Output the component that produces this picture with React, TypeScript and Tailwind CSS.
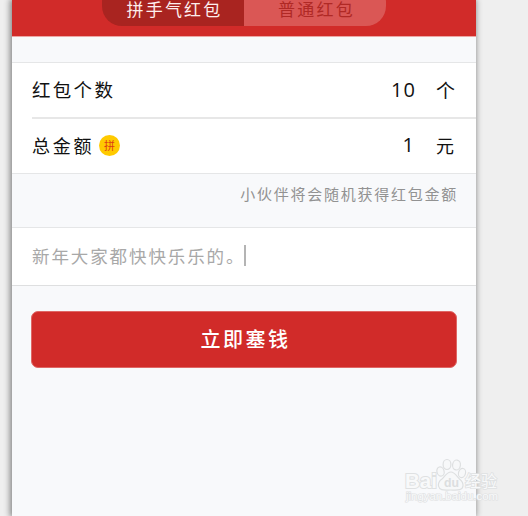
const Tabs = () => (
  <div className="-mt-[18px] flex h-11 w-[284px] overflow-hidden rounded-[20px] text-[17px] leading-none tracking-[2.2px]">
    <div className="flex w-[142px] items-center justify-center bg-[#a92420] pt-[8px] pl-[3px] text-[#fdeeed]">拼手气红包</div>
    <div className="flex w-[142px] items-center justify-center bg-[#da5755] pt-[8px] pl-[3px] text-[#b02925]">普通红包</div>
  </div>
);

const Watermark = () => (
  <div className="absolute top-[456px] left-[402px] h-[50px] w-[100px]">
    <svg width="100" height="50" viewBox="0 0 100 50" className="overflow-visible">
      <g fill="#f7f8f9" stroke="#dddfe0" strokeWidth="1.2">
        <ellipse cx="38.5" cy="15.5" rx="3.6" ry="4.7" transform="rotate(-15 38.5 15.5)" />
        <ellipse cx="45" cy="8.5" rx="3.9" ry="5" />
        <ellipse cx="54.5" cy="9" rx="3.9" ry="5" transform="rotate(8 54.5 9)" />
        <ellipse cx="60" cy="17" rx="3.5" ry="4.7" transform="rotate(15 60 17)" />
        <path d="M49 16c-4 0-6 4-9 7-3 2-4 4-3.500 7 1 5 6 4 12 4s12 1 12.500-4c.3-3-1-5-3.500-7-3-3-5-7-8.500-7z" />
      </g>
      <g
        fill="#f8f9fa"
        stroke="#dfe1e2"
        paintOrder="stroke"
        fontFamily="'Liberation Sans', 'Noto Sans CJK SC', sans-serif"
      >
        <text x="3" y="32" fontSize="21" strokeWidth="2" fontWeight="bold" textLength="32" lengthAdjust="spacingAndGlyphs">Bai</text>
        <text x="42" y="31" fontSize="13" fontWeight="bold" textLength="15" lengthAdjust="spacingAndGlyphs" fill="#dcdedf" stroke="none">du</text>
        <text x="63" y="31" fontSize="16" strokeWidth="1.6" textLength="32" lengthAdjust="spacingAndGlyphs">经验</text>
        <text x="4" y="44" fontSize="10" strokeWidth="1.2" textLength="92" lengthAdjust="spacingAndGlyphs">jingyan.baidu.com</text>
      </g>
    </svg>
  </div>
);

export default function App() {
  return (
    <div className="relative h-[516px] w-[528px] overflow-hidden bg-[#efefef] font-['Noto_Sans_CJK_SC',sans-serif] text-[#111]">
      <div className="ml-3 flow-root h-full w-[464px] bg-[#f8f9fb] shadow-[-1px_0_6px_1px_rgba(0,0,0,0.45)]">
        <header className="flex h-[37px] justify-center border-b border-[#eda6a4] bg-[#d12b29]">
          <Tabs />
        </header>

        <section className="mt-[25px] border-y border-[#e5e6e7] bg-white">
          <div className="ml-5 flex h-14 items-center justify-between border-b-2 border-[#e7e7e7] pr-[21px]">
            <span className="text-[18.5px] tracking-[2.3px]">红包个数</span>
            <div className="flex items-center">
              <span className="font-['Open_Sans',sans-serif] text-[20px] tracking-[1px]">10</span>
              <span className="ml-[20px] text-[19px]">个</span>
            </div>
          </div>
          <div className="ml-5 flex h-[54px] items-center justify-between pr-[22px] pb-[2px]">
            <div className="flex items-center">
              <span className="text-[18px] tracking-[2.7px]">总金额</span>
              <span className="ml-[5px] flex size-[21px] items-center justify-center rounded-full bg-[#ffca00] text-[11px] leading-none text-[#dc3a16]">拼</span>
            </div>
            <div className="flex items-center">
              <span className="font-['Open_Sans',sans-serif] text-[20px]">1</span>
              <span className="ml-[22px] text-[18px]">元</span>
            </div>
          </div>
        </section>

        <p className="flex h-[53px] justify-end pt-[11px] pr-[18px] text-[15px] leading-[18px] tracking-[1.75px] text-[#929292]">
          小伙伴将会随机获得红包金额
        </p>

        <div className="flex h-[59px] items-center border-t border-b-[1.5px] border-t-[#e5e6e7] border-b-[#dedfe0] bg-white pl-5">
          <span className="w-[212px] text-[17.5px] tracking-[1.9px] whitespace-nowrap text-[#a8a8a8]">新年大家都快快乐乐的。</span>
          <span className="mb-[2px] h-[21px] w-[2px] bg-[#b4b4b4]" />
        </div>

        <button className="mt-[25px] ml-[19px] flex h-[57px] w-[426px] items-center justify-center rounded-[7px] border border-[#df6765] bg-[#d12b29] pb-[2px] pl-[3px] text-[20px] font-medium tracking-[2.5px] text-white">
          立即塞钱
        </button>
      </div>
      <Watermark />
    </div>
  );
}
